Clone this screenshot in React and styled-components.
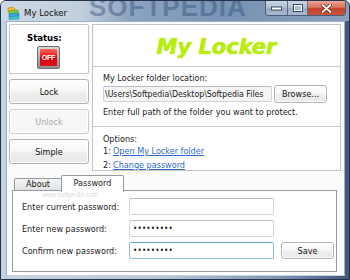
import React from 'react';
import styled, { createGlobalStyle } from 'styled-components';

const UI = `"DejaVu Sans Condensed", "Liberation Sans", sans-serif`;

const GlobalStyle = createGlobalStyle`
  html, body {
    margin: 0;
    padding: 0;
    background: #fff;
  }
  body {
    width: 350px;
    height: 280px;
    overflow: hidden;
  }
`;

const Window = styled.div`
  width: 350px;
  height: 280px;
  box-sizing: border-box;
  display: flex;
  flex-direction: column;
  padding: 0 4px 3px 5px;
  background: linear-gradient(to right, #c4d2e1 0%, #b7c7d9 45%, #7d96b4 80%, #3f5879 100%);
  border: 1px solid #24334b;
  border-radius: 6px 6px 0 0;
  font-family: ${UI};
  color: #1b1b1b;
  overflow: hidden;
`;

const TitleBar = styled.div`
  position: relative;
  flex: none;
  height: 20px;
  margin: 0 -4px 0 -5px;
  display: flex;
  align-items: flex-start;
  background: linear-gradient(to right, #cbd7e4 0px, #c2cfdd 80px, #8ba3c0 130px, #7893b4 230px, #8aa1bc 350px);
  overflow: hidden;
`;

const Watermark = styled.span`
  position: absolute;
  left: 88px;
  top: -9px;
  font-family: "Liberation Sans", sans-serif;
  font-weight: bold;
  font-size: 26px;
  line-height: 30px;
  letter-spacing: 1px;
  color: rgba(40, 72, 118, 0.42);
  pointer-events: none;
`;

const TitleText = styled.span`
  position: relative;
  margin: 5px 0 0 4px;
  font-size: 9.5px;
  line-height: 13px;
  color: #111;
`;

const Controls = styled.div`
  position: relative;
  display: flex;
  margin: 0 3px 0 auto;
  height: 14px;
  border: 1px solid #4b5d77;
  border-top: none;
  border-radius: 0 0 4px 4px;
  overflow: hidden;
`;

const CtrlButton = styled.div`
  width: ${(p) => p.w}px;
  height: 14px;
  display: flex;
  align-items: center;
  justify-content: center;
  border-left: ${(p) => (p.first ? 'none' : '1px solid #5c6f89')};
  background: ${(p) =>
    p.close
      ? 'linear-gradient(#e9a795 0%, #d9735e 45%, #c4402c 55%, #c9553f 100%)'
      : 'linear-gradient(#c9d5e2 0%, #b3c2d3 45%, #98abc2 55%, #a9bacd 100%)'};
`;

const Client = styled.div`
  flex: 1;
  display: flex;
  flex-direction: column;
  background: #fbfbfb;
  border: 1px solid #9fb0c4;
  border-bottom-color: #c8d2dd;
`;

const TopRow = styled.div`
  display: flex;
  gap: 3px;
  height: 147px;
  padding: 2px 3px 0 2px;
`;

const LeftCol = styled.div`
  width: 80px;
  display: flex;
  flex-direction: column;
`;

const StatusPanel = styled.div`
  height: 50px;
  box-sizing: border-box;
  border: 1px solid #c6c6c6;
  border-radius: 2px;
  background: #fff;
  padding: 6px 0 0 17px;
  display: flex;
  flex-direction: column;
  align-items: flex-start;
`;

const StatusLabel = styled.span`
  font-weight: bold;
  font-size: 9.5px;
  line-height: 13px;
  color: #000;
`;

const OffSwitch = styled.div`
  margin: 2px 0 0 10px;
  width: 23px;
  height: 23px;
  box-sizing: border-box;
  border: 1px solid #6f6f6f;
  border-radius: 2px;
  padding: 2px;
  background: linear-gradient(#d8d8d8, #8e8e8e);
  & span {
    display: flex;
    align-items: center;
    justify-content: center;
    height: 100%;
    border-radius: 1px;
    background: linear-gradient(#ff6a5e 0%, #f0141a 45%, #d00008 55%, #e1121a 100%);
    font-family: "Liberation Sans", sans-serif;
    font-weight: bold;
    font-size: 7px;
    color: #fff;
    letter-spacing: -0.2px;
  }
`;

const Button = styled.button`
  box-sizing: border-box;
  height: ${(p) => p.h || 17}px;
  width: ${(p) => (p.w ? `${p.w}px` : 'auto')};
  margin: 0;
  margin-top: ${(p) => p.mt || 0}px;
  padding: 0;
  border: 1px solid ${(p) => (p.disabled ? '#cdcdcd' : '#b3b3b3')};
  border-radius: 3px;
  background: ${(p) =>
    p.disabled
      ? '#f6f6f6'
      : 'linear-gradient(#fefefe 0%, #f7f7f7 48%, #eeeeee 52%, #e8e8e8 100%)'};
  box-shadow: inset 0 0 0 1px rgba(255, 255, 255, 0.9);
  font-family: ${UI};
  font-size: 9px;
  color: ${(p) => (p.disabled ? '#a6a6a6' : '#111')};
`;

const MainBox = styled.div`
  flex: 1;
  display: flex;
  flex-direction: column;
  border: 1px solid #c4c4c4;
  background: #fff;
`;

const Header = styled.div`
  height: 39px;
  flex: none;
  border-bottom: 1px solid #c8c8c8;
  display: flex;
  align-items: center;
  justify-content: center;
  font-family: "DejaVu Sans", sans-serif;
  font-style: italic;
  font-weight: bold;
  font-size: 21px;
  color: #b7ef0a;
  text-shadow: 0 0 1px #a6d800;
  padding-top: 2px;
`;

const FolderSection = styled.div`
  height: 54px;
  flex: none;
  border-bottom: 1px solid #c8c8c8;
  padding: 5px 0 0 10px;
`;

const Text = styled.div`
  font-size: 9px;
  line-height: 12px;
  margin-top: ${(p) => p.mt || 0}px;
  white-space: nowrap;
`;

const PathRow = styled.div`
  display: flex;
  align-items: center;
  gap: 2px;
  height: 18px;
  margin-top: 1px;
`;

const Field = styled.input`
  box-sizing: border-box;
  width: ${(p) => p.w}px;
  height: ${(p) => p.h || 17}px;
  margin: 0;
  padding: 0 ${(p) => (p.tight ? 1 : 3)}px;
  border: 1px solid ${(p) => (p.focus ? '#8cb9e4' : '#cfd3d9')};
  border-top-color: ${(p) => (p.focus ? '#6fa4d8' : '#b9bdc4')};
  border-radius: 2px;
  background: ${(p) => p.bg || '#fff'};
  font-family: ${UI};
  font-size: ${(p) => (p.tight ? 8.7 : 9)}px;
  color: #1b1b1b;
  outline: none;
  &[type='password'] {
    font-size: 8px;
    letter-spacing: 0.2px;
  }
`;

const OptionsSection = styled.div`
  padding: 6px 0 0 10px;
`;

const OptionRow = styled.div`
  display: flex;
  font-size: 9px;
  line-height: 12px;
  margin-top: ${(p) => p.mt || 0}px;
`;

const Num = styled.span`
  width: 10px;
`;

const Link = styled.a`
  color: #2f6bc6;
  text-decoration: underline;
  cursor: pointer;
`;

const TabControl = styled.div`
  position: relative;
  flex: 1;
  display: flex;
  flex-direction: column;
  margin: 4px 7px 3px 5px;
`;

const TabStrip = styled.div`
  height: 16px;
  display: flex;
  align-items: flex-end;
  padding-left: 2px;
  position: relative;
  z-index: 1;
`;

const Tab = styled.div`
  box-sizing: border-box;
  width: ${(p) => p.w}px;
  height: ${(p) => (p.active ? 17 : 13)}px;
  margin-bottom: ${(p) => (p.active ? -1 : 0)}px;
  margin-left: ${(p) => (p.active ? -1 : 0)}px;
  border: 1px solid #979ba3;
  border-bottom: ${(p) => (p.active ? 'none' : '1px solid #979ba3')};
  border-radius: 2px 2px 0 0;
  background: ${(p) => (p.active ? '#fff' : 'linear-gradient(#f4f4f4, #e2e2e2)')};
  font-size: 9px;
  line-height: ${(p) => (p.active ? 15 : 11)}px;
  text-align: center;
`;

const Pane = styled.div`
  position: relative;
  flex: 1;
  margin-top: -1px;
  border: 1px solid #979ba3;
  background: #fff;
  padding: 7px 0 0 9px;
  display: grid;
  grid-template-columns: 100px 145px 53px;
  grid-auto-rows: 17px;
  column-gap: 7px;
  row-gap: 5px;
  align-items: center;
`;

const SiteMark = styled.span`
  position: absolute;
  left: 29px;
  top: 0px;
  font-family: "Liberation Sans", sans-serif;
  font-size: 6.5px;
  line-height: 7px;
  color: rgba(150, 150, 150, 0.4);
  pointer-events: none;
`;

const AppIcon = () => (
  <svg width="13" height="14" viewBox="0 0 13 14" style={{ marginTop: 5, marginLeft: 6, flex: 'none' }}>
    <path d="M1 2 L6 1 L8 3 L8 5 L1 6 Z" fill="#f4b52e" stroke="#a8741a" strokeWidth="0.5" />
    <path d="M2 5 L11 4 L11 7 L2 8 Z" fill="#7ccf3d" stroke="#3f8a1d" strokeWidth="0.5" />
    <path d="M2 8 L12 7 L12 10 L2 11 Z" fill="#3fa5e0" stroke="#1f6aa3" strokeWidth="0.5" />
    <path d="M2 11 L12 10 L12 13 L2 13.5 Z" fill="#3ac9d8" stroke="#1d8a96" strokeWidth="0.5" />
  </svg>
);

export default function App() {
  return (
    <>
      <GlobalStyle />
      <Window>
        <TitleBar>
          <Watermark>SOFTPEDIA</Watermark>
          <AppIcon />
          <TitleText>My Locker</TitleText>
          <Controls>
            <CtrlButton w={21} first>
              <svg width="11" height="5" viewBox="0 0 11 5">
                <rect x="0.5" y="1" width="10" height="3" fill="#fff" stroke="#3d4c62" strokeWidth="1" />
              </svg>
            </CtrlButton>
            <CtrlButton w={19}>
              <svg width="10" height="8" viewBox="0 0 10 8">
                <rect x="0.5" y="0.5" width="9" height="7" fill="none" stroke="#3d4c62" strokeWidth="1" />
                <rect x="1.5" y="1.5" width="7" height="5" fill="none" stroke="#fff" strokeWidth="1" />
                <rect x="2.5" y="3" width="5" height="3" fill="#aebdcf" />
              </svg>
            </CtrlButton>
            <CtrlButton w={37} close>
              <svg width="11" height="9" viewBox="0 0 11 9">
                <path d="M1.5 1 L9.5 8 M9.5 1 L1.5 8" stroke="#5b2016" strokeWidth="3.2" strokeLinecap="round" />
                <path d="M1.5 1 L9.5 8 M9.5 1 L1.5 8" stroke="#fff" strokeWidth="1.8" strokeLinecap="round" />
              </svg>
            </CtrlButton>
          </Controls>
        </TitleBar>

        <Client>
          <TopRow>
            <LeftCol>
              <StatusPanel>
                <StatusLabel>Status:</StatusLabel>
                <OffSwitch>
                  <span>OFF</span>
                </OffSwitch>
              </StatusPanel>
              <Button h={25} mt={5}>Lock</Button>
              <Button h={25} mt={5} disabled>Unlock</Button>
              <Button h={25} mt={5}>Simple</Button>
            </LeftCol>

            <MainBox>
              <Header>My Locker</Header>
              <FolderSection>
                <Text>My Locker folder location:</Text>
                <PathRow>
                  <Field w={169} h={16} tight bg="#f4f4f4" readOnly value="\Users\Softpedia\Desktop\Softpedia Files" />
                  <Button w={53} h={18}>Browse...</Button>
                </PathRow>
                <Text mt={3}>Enter full path of the folder you want to protect.</Text>
              </FolderSection>
              <OptionsSection>
                <Text>Options:</Text>
                <OptionRow>
                  <Num>1:</Num>
                  <Link>Open My Locker folder</Link>
                </OptionRow>
                <OptionRow mt={2}>
                  <Num>2:</Num>
                  <Link>Change password</Link>
                </OptionRow>
              </OptionsSection>
            </MainBox>
          </TopRow>

          <TabControl>
            <TabStrip>
              <Tab w={48}>About</Tab>
              <Tab w={63} active>Password</Tab>
            </TabStrip>
            <Pane>
              <SiteMark>www.softpedia.com</SiteMark>
              <Text>Enter current password:</Text>
              <Field w={145} readOnly value="" />
              <span />
              <Text>Enter new password:</Text>
              <Field w={145} type="password" readOnly value="softpedia" />
              <span />
              <Text>Confirm new password:</Text>
              <Field w={145} type="password" readOnly focus value="softpedia" />
              <Button w={53} h={17}>Save</Button>
            </Pane>
          </TabControl>
        </Client>
      </Window>
    </>
  );
}
